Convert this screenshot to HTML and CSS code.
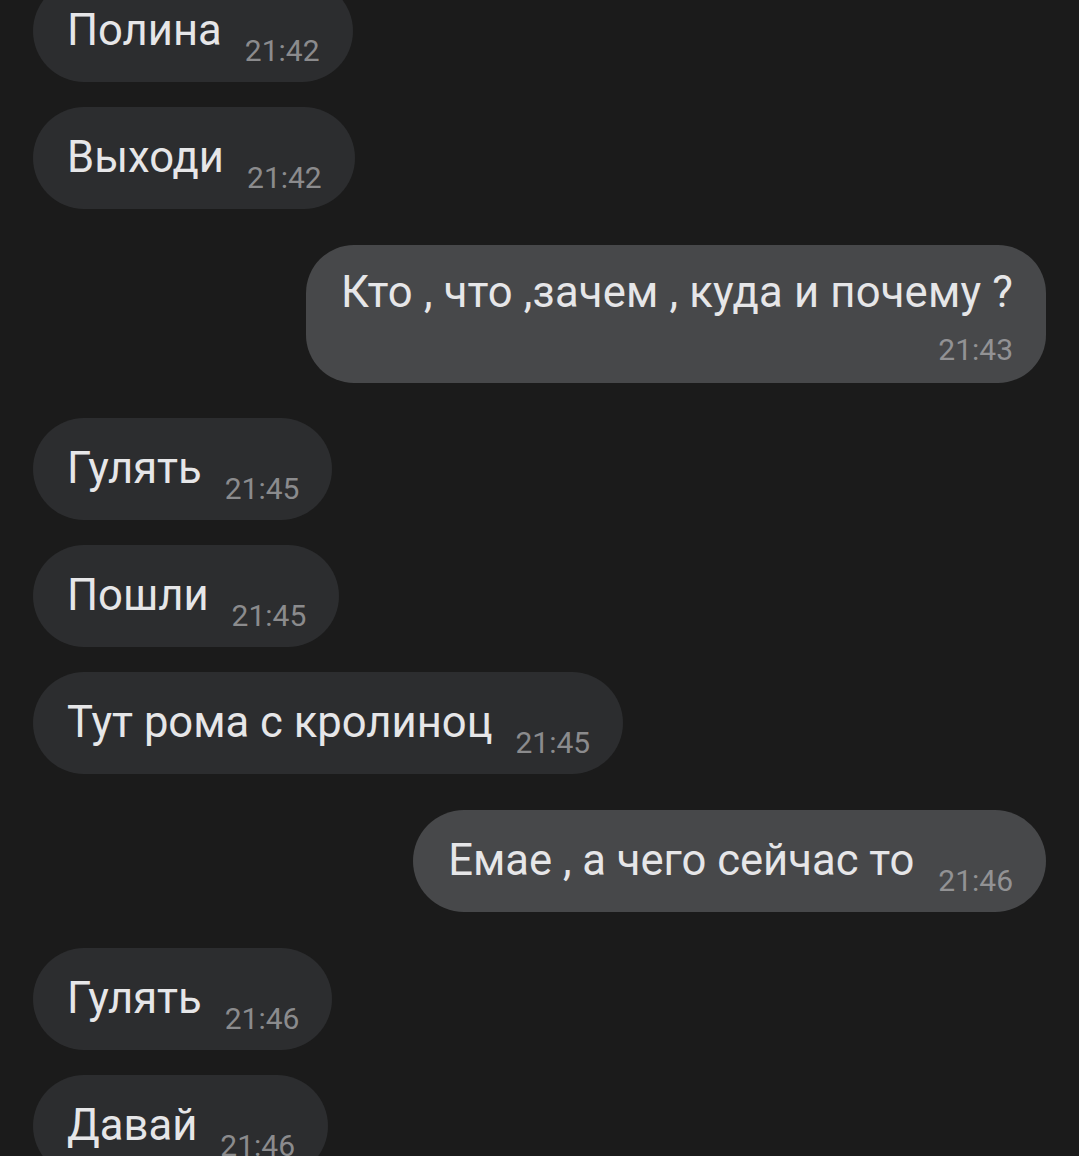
FILE: index.html
```html
<!DOCTYPE html>
<html lang="ru">
<head>
<meta charset="utf-8">
<title>Чат</title>
<link rel="stylesheet" href="styles.css">
</head>
<body>
<div class="chat">
  <div class="msg in"><div class="bubble"><span class="text">Полина</span><span class="time">21:42</span></div></div>
  <div class="msg in"><div class="bubble"><span class="text">Выходи</span><span class="time">21:42</span></div></div>
  <div class="msg out switch"><div class="bubble stack"><span class="text">Кто , что ,зачем , куда и почему ?</span><span class="time">21:43</span></div></div>
  <div class="msg in switch after-stack"><div class="bubble"><span class="text">Гулять</span><span class="time">21:45</span></div></div>
  <div class="msg in"><div class="bubble"><span class="text">Пошли</span><span class="time">21:45</span></div></div>
  <div class="msg in"><div class="bubble"><span class="text">Тут рома с кролиноц</span><span class="time">21:45</span></div></div>
  <div class="msg out switch"><div class="bubble"><span class="text">Емае , а чего сейчас то</span><span class="time">21:46</span></div></div>
  <div class="msg in switch"><div class="bubble"><span class="text">Гулять</span><span class="time">21:46</span></div></div>
  <div class="msg in"><div class="bubble"><span class="text">Давай</span><span class="time">21:46</span></div></div>
</div>
</body>
</html>
```
FILE: styles.css
```css
html, body {
  margin: 0;
  padding: 0;
  background: #1b1b1b;
  height: 100%;
  overflow: hidden;
}
body {
  font-family: Roboto, "Noto Sans", sans-serif;
  color: #e6e6e8;
}
.chat {
  display: flex;
  flex-direction: column;
  padding: 0 33px;
  margin-top: -20px;
}
.msg {
  display: flex;
  margin-top: 25px;
}
.msg:first-child {
  margin-top: 0;
}
.msg.switch {
  margin-top: 36px;
}
.msg.after-stack {
  margin-top: 35px;
}
.msg.in {
  justify-content: flex-start;
}
.msg.out {
  justify-content: flex-end;
}
.bubble {
  display: flex;
  align-items: flex-start;
  column-gap: 23px;
  box-sizing: border-box;
  height: 102px;
  padding: 25px 33px 13px 34px;
  border-radius: 51px;
  background: #2c2d2f;
}
.msg.out .bubble {
  background: #47484a;
  padding-left: 35px;
  column-gap: 24px;
}
.text {
  font-size: 43.6px;
  line-height: 52px;
  white-space: nowrap;
}
.time {
  font-size: 30px;
  line-height: 36px;
  margin-top: 28px;
  color: #8b8b8d;
  white-space: nowrap;
}
.msg.out .time {
  color: #929294;
}
.msg.out .bubble.stack {
  display: block;
  height: 138px;
  padding: 22px 33px 15px 35px;
  border-radius: 48px;
}
.bubble.stack .text,
.bubble.stack .time {
  display: block;
}
.bubble.stack .text {
  letter-spacing: 0.18px;
}
.bubble.stack .time {
  text-align: right;
  margin-top: 13px;
}
```
